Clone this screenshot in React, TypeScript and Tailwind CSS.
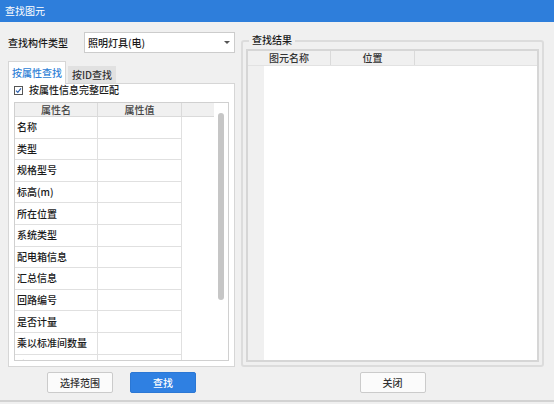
import React from "react";

const rows = [
  "名称",
  "类型",
  "规格型号",
  "标高(m)",
  "所在位置",
  "系统类型",
  "配电箱信息",
  "汇总信息",
  "回路编号",
  "是否计量",
  "乘以标准间数量",
  "倍数",
];

export default function App() {
  return (
    <div className="w-[554px] h-[404px] bg-[#f0f0f0] flex flex-col overflow-hidden text-[10px] leading-[14px] font-medium text-[#1a1a1a] font-['Noto_Sans_CJK_SC','Noto_Sans',sans-serif]">
      {/* Title bar */}
      <div className="h-[22px] shrink-0 bg-[#2e7edb] text-white pl-[5px] flex items-center text-[10px] font-normal">
        查找图元
      </div>

      {/* Body */}
      <div className="flex px-[8px] pt-[10px] gap-[6px] shrink-0">
        {/* Left column */}
        <div className="w-[227px] flex flex-col">
          <div className="h-[21px] flex items-center">
            <div className="w-[76px]">查找构件类型</div>
            <div className="w-[151px] h-[21px] bg-white border border-[#cccccc] flex items-center justify-between pl-[3px] pr-[4px]">
              <span>照明灯具(电)</span>
              <span className="w-0 h-0 border-l-[3px] border-r-[3px] border-t-[3px] border-l-transparent border-r-transparent border-t-[#555555]" />
            </div>
          </div>

          {/* Tabs */}
          <div className="mt-[8px] h-[22px] flex items-end">
            <div className="relative z-10 -mb-px w-[58px] h-[23px] bg-white border-t border-l border-r border-[#d6d6d6] text-[#2f7fd6] flex items-center justify-center">
              按属性查找
            </div>
            <div className="ml-[2px] w-[48px] h-[17px] bg-[#e1e1e1] flex items-center justify-center text-[#333333]">
              按ID查找
            </div>
          </div>

          {/* Panel */}
          <div className="h-[284px] bg-white border border-[#d6d6d6] px-[5px] flex flex-col">
            <div className="h-[10px] mt-[1px] flex items-center">
              <span className="w-[9px] h-[9px] border border-[#555555] bg-white flex items-center justify-center mr-[6px]">
                <svg width="7" height="7" viewBox="0 0 7 7">
                  <path d="M1 3.6 L2.8 5.4 L6 1.3" fill="none" stroke="#2a5fb0" strokeWidth="1.2" />
                </svg>
              </span>
              <span>按属性信息完整匹配</span>
            </div>

            <div className="mt-[7px] h-[259px] border border-[#d0d0d0] flex overflow-hidden">
              <div className="w-[199px] flex flex-col">
                <div className="h-[14px] shrink-0 flex bg-[#f0f0f0] border-b border-[#dadada] text-[#444444]">
                  <div className="w-[83px] border-r border-[#dadada] flex items-center justify-center">属性名</div>
                  <div className="w-[84px] border-r border-[#dadada] flex items-center justify-center">属性值</div>
                  <div className="flex-1" />
                </div>
                {rows.map((r) => (
                  <div key={r} className="h-[21.6px] shrink-0 flex">
                    <div className="w-[83px] border-r border-b border-[#e0e0e0] flex items-center pl-[2px] whitespace-nowrap overflow-hidden">{r}</div>
                    <div className="w-[84px] border-r border-b border-[#e0e0e0]" />
                    <div className="flex-1" />
                  </div>
                ))}
              </div>
              <div className="flex-1 bg-white pl-[4px] pt-[10px]">
                <div className="w-[6px] h-[187px] rounded-full bg-[#c6c6c6]" />
              </div>
            </div>
          </div>
        </div>

        {/* Right column */}
        <div className="w-[303px] flex flex-col">
          <div className="relative mt-[8px] h-[327px] border-2 border-[#dcdcdc] rounded-[3px] px-[3px] pt-[7px] pb-[3px]">
            <span className="absolute -top-[10px] left-[6px] px-[3px] bg-[#f0f0f0] leading-[16px]">查找结果</span>
            <div className="h-[313px] border-2 border-[#d6d6d6] flex flex-col bg-white">
              <div className="h-[15px] shrink-0 flex bg-[#f0f0f0] border-b border-[#e2e2e2] text-[#333333]">
                <div className="w-[83px] border-r border-[#dadada] flex items-center justify-center">图元名称</div>
                <div className="w-[84px] border-r border-[#dadada] flex items-center justify-center">位置</div>
                <div className="flex-1" />
              </div>
              <div className="flex-1 flex">
                <div className="w-[16px] bg-[#f0f0f0]" />
                <div className="flex-1 bg-white" />
              </div>
            </div>
          </div>
        </div>
      </div>

      {/* Buttons */}
      <div className="flex px-[8px] gap-[6px] mt-[5px] shrink-0">
        <div className="w-[227px] flex justify-center gap-[17px]">
          <button className="w-[66px] h-[21px] bg-[#fbfbfb] border border-[#cbcbcb] rounded-[2px] text-[#333333]">选择范围</button>
          <button className="w-[66px] h-[21px] bg-[#2f80e2] border border-[#2b77d4] rounded-[2px] text-white">查找</button>
        </div>
        <div className="w-[303px] flex justify-center">
          <button className="w-[66px] h-[21px] bg-[#fbfbfb] border border-[#cbcbcb] rounded-[2px] text-[#333333]">关闭</button>
        </div>
      </div>

      <div className="mt-[7px] h-[2px] bg-[#d2d2d2] shrink-0" />
    </div>
  );
}
